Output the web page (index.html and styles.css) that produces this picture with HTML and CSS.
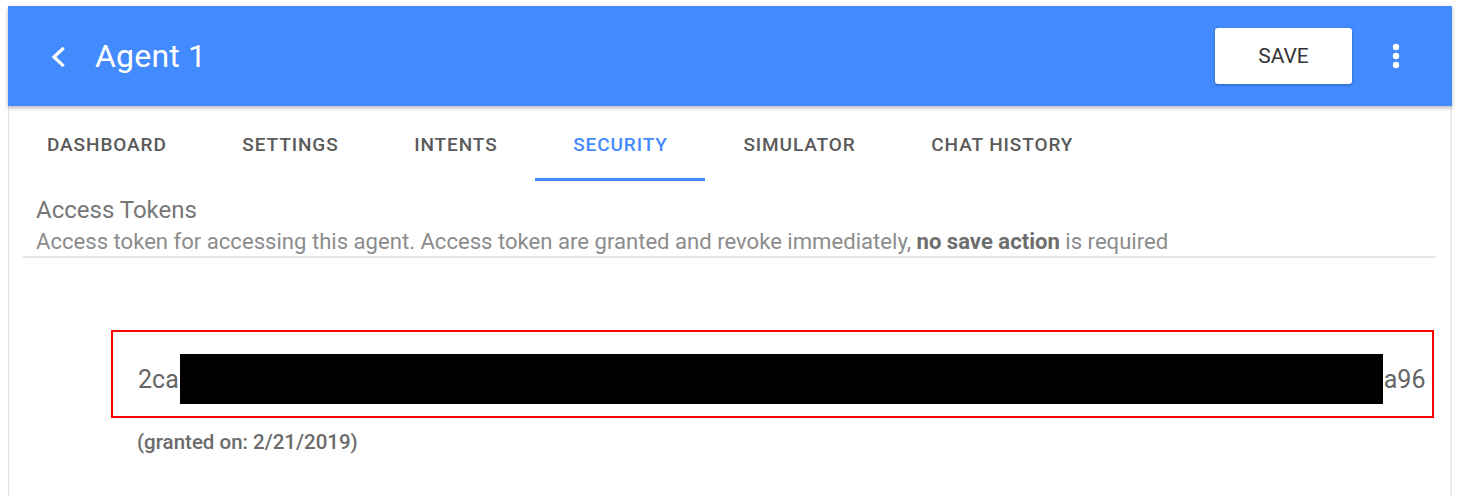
FILE: index.html
```html
<!DOCTYPE html>
<html lang="en">
<head>
<meta charset="utf-8">
<title>Agent 1 - Security</title>
<link rel="stylesheet" href="styles.css">
</head>
<body>
<div class="card">
  <header class="topbar">
    <button class="back" aria-label="Back">
      <svg width="14" height="20" viewBox="0 0 14 20"><polyline points="11.5,2 3,10 11.5,18" fill="none" stroke="#fff" stroke-width="3.2" stroke-linecap="square"/></svg>
    </button>
    <h1 class="title">Agent 1</h1>
    <div class="spacer"></div>
    <button class="save">SAVE</button>
    <button class="more" aria-label="More">
      <svg width="24" height="30" viewBox="0 0 24 30"><circle cx="12" cy="6" r="3.2" fill="#fff"/><circle cx="12" cy="15" r="3.2" fill="#fff"/><circle cx="12" cy="24" r="3.2" fill="#fff"/></svg>
    </button>
  </header>
  <nav class="tabs">
    <div class="tab">DASHBOARD</div>
    <div class="tab">SETTINGS</div>
    <div class="tab">INTENTS</div>
    <div class="tab active">SECURITY</div>
    <div class="tab">SIMULATOR</div>
    <div class="tab">CHAT HISTORY</div>
  </nav>
  <section class="section">
    <h2 class="section-title">Access Tokens</h2>
    <p class="section-desc">Access token for accessing this agent. Access token are granted and revoke immediately, <b>no save action</b> is required</p>
  </section>
  <div class="tokens">
    <div class="token-box">
      <span class="token-text">2ca</span><span class="redact"></span><span class="token-text">a96</span>
    </div>
    <div class="granted">(granted on: 2/21/2019)</div>
  </div>
</div>
</body>
</html>
```
FILE: styles.css
```css
* { box-sizing: border-box; }
html, body { height: 100%; }
body {
  margin: 0;
  padding: 6px 10px 0 8px;
  background: #fff;
  font-family: Roboto, "Liberation Sans", sans-serif;
  overflow: hidden;
}
.card {
  min-height: 100%;
  border-left: 1px solid #e3e3e3;
  border-right: 2px solid #ececec;
  background: #fff;
}
.topbar {
  height: 100px;
  margin-left: -1px;
  margin-right: -2px;
  background: #448aff;
  display: flex;
  align-items: center;
  padding: 0 44px 0 43px;
  box-shadow: 0 2px 4px rgba(0,0,0,0.28);
  position: relative;
  z-index: 1;
}
.back, .more {
  background: none;
  border: 0;
  padding: 0;
  display: flex;
  cursor: pointer;
}
.back { margin-top: 2px; }
.title {
  margin: 0 0 0 30px;
  color: #fff;
  font-size: 32px;
  font-weight: 400;
  letter-spacing: 0.2px;
}
.spacer { flex: 1; }
.save {
  width: 137px;
  height: 56px;
  background: #fff;
  border: 0;
  border-radius: 3px;
  box-shadow: 0 1px 3px rgba(0,0,0,0.3);
  font-family: Roboto, "Liberation Sans", sans-serif;
  font-size: 21px;
  color: #333;
  margin-right: 32px;
}
.tabs {
  display: flex;
  height: 75px;
}
.tab {
  padding: 4px 37.6px 0 38px;
  border-bottom: 3px solid transparent;
  display: flex;
  align-items: center;
  font-size: 19px;
  font-weight: 500;
  color: #5a5a5a;
  letter-spacing: 0.9px;
}
.tab.active {
  color: #448aff;
  border-bottom-color: #448aff;
}
.section {
  margin: 0 14px;
  padding: 15px 13px 2px;
  border-bottom: 2px solid #e6e6e6;
}
.section-title {
  margin: 0;
  font-size: 24px;
  font-weight: 400;
  color: #777;
  line-height: 28px;
}
.section-desc {
  margin: 4px 0 0;
  font-size: 22.1px;
  color: #8c8c8c;
  line-height: 26px;
}
.section-desc b { color: #6e6e6e; font-weight: 700; }
.tokens {
  padding: 72px 16px 0 102px;
}
.token-box {
  height: 88px;
  border: 2px solid #f00;
  display: flex;
  align-items: center;
  padding: 10px 8px 0 25px;
  overflow: hidden;
}
.token-text {
  font-size: 25px;
  color: #666;
  white-space: nowrap;
}
.redact {
  flex: 0 0 1203px;
  height: 50px;
  background: #000;
  margin: 0 1px 0 1px;
}
.granted {
  margin: 12px 0 0 26px;
  font-size: 20.5px;
  font-weight: 500;
  color: #6b6b6b;
}
```
